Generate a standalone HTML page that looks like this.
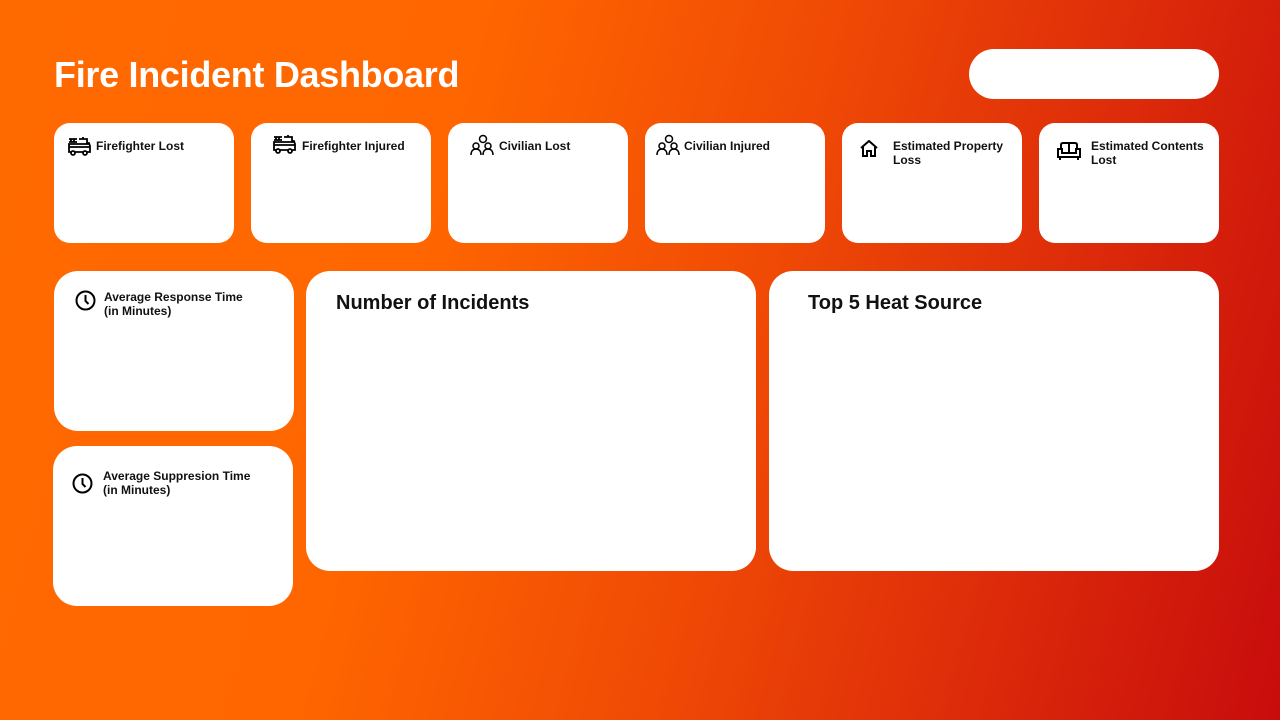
<!DOCTYPE html>
<html><head><meta charset="utf-8"><style>
*{margin:0;padding:0;box-sizing:border-box}
body{width:1280px;height:720px;overflow:hidden;font-family:"Liberation Sans",sans-serif;
background:linear-gradient(105deg,#ff6a00 0%,#ff6600 33%,#f04a05 57%,#dc2a0a 79%,#c80c0c 100%);position:relative}
.c{position:absolute;background:#fff;border-radius:16px}
h1{position:absolute;left:54px;top:54px;color:#fff;font-size:36px;font-weight:bold;letter-spacing:-0.3px}
.t{position:absolute;font-size:12px;font-weight:bold;color:#111;line-height:14px}
.b{position:absolute;font-size:20px;font-weight:bold;color:#111}
svg{position:absolute}
</style></head><body>
<h1>Fire Incident Dashboard</h1>
<div class="c" style="left:969px;top:49px;width:250px;height:50px;border-radius:25px"></div>

<div class="c" style="left:54px;top:123px;width:180px;height:120px"></div>
<div class="c" style="left:251px;top:123px;width:180px;height:120px"></div>
<div class="c" style="left:448px;top:123px;width:180px;height:120px"></div>
<div class="c" style="left:645px;top:123px;width:180px;height:120px"></div>
<div class="c" style="left:842px;top:123px;width:180px;height:120px"></div>
<div class="c" style="left:1039px;top:123px;width:180px;height:120px"></div>

<svg style="left:68px;top:136px" width="23" height="20" viewBox="0 0 23 20" fill="none" stroke="#000" stroke-width="1.8"><path d="M1 3h8M1 6h8M3 3v3M6 3v3M15 1v2M11 3h8v4h2l1 3v6H1V8h21M1 11h21"/><circle cx="5" cy="17" r="2" fill="#fff"/><circle cx="17" cy="17" r="2" fill="#fff"/></svg>
<div class="t" style="left:96px;top:139px">Firefighter Lost</div>
<svg style="left:273px;top:134px" width="23" height="20" viewBox="0 0 23 20" fill="none" stroke="#000" stroke-width="1.8"><path d="M1 3h8M1 6h8M3 3v3M6 3v3M15 1v2M11 3h8v4h2l1 3v6H1V8h21M1 11h21"/><circle cx="5" cy="17" r="2" fill="#fff"/><circle cx="17" cy="17" r="2" fill="#fff"/></svg>
<div class="t" style="left:302px;top:139px">Firefighter Injured</div>

<svg style="left:470px;top:134px" width="24" height="22" viewBox="0 0 24 22" fill="none" stroke="#000" stroke-width="1.5"><circle cx="13" cy="5" r="3.5"/><circle cx="6" cy="12" r="3"/><circle cx="18" cy="12" r="3"/><path d="M1 21c0-4 2-6 5-6s5 2 5 6M13 21c0-4 2-6 5-6s5 2 5 6"/></svg>
<div class="t" style="left:499px;top:139px">Civilian Lost</div>
<svg style="left:656px;top:134px" width="24" height="22" viewBox="0 0 24 22" fill="none" stroke="#000" stroke-width="1.5"><circle cx="13" cy="5" r="3.5"/><circle cx="6" cy="12" r="3"/><circle cx="18" cy="12" r="3"/><path d="M1 21c0-4 2-6 5-6s5 2 5 6M13 21c0-4 2-6 5-6s5 2 5 6"/></svg>
<div class="t" style="left:684px;top:139px">Civilian Injured</div>

<svg style="left:860px;top:140px" width="18" height="17" viewBox="0 0 18 17" fill="none" stroke="#000" stroke-width="2"><path d="M1 8L9 1l8 7M3 7v9h4v-5h4v5h4V7"/></svg>
<div class="t" style="left:893px;top:139px">Estimated Property<br>Loss</div>
<svg style="left:1057px;top:142px" width="24" height="19" viewBox="0 0 24 19" fill="none" stroke="#000" stroke-width="2"><path d="M4 7V3q0-2 2-2h12q2 0 2 2v4M12 1v9M1 7h4v4h14V7h4v8H1zM3 15v3M21 15v3"/></svg>
<div class="t" style="left:1091px;top:139px">Estimated Contents<br>Lost</div>

<div class="c" style="left:54px;top:271px;width:240px;height:160px;border-radius:24px"></div>
<div class="c" style="left:53px;top:446px;width:240px;height:160px;border-radius:24px"></div>
<svg style="left:75px;top:290px" width="21" height="21" viewBox="0 0 21 21" fill="none" stroke="#000" stroke-width="2"><circle cx="10.5" cy="10.5" r="9"/><path d="M10.5 5v6l3 3"/></svg>
<div class="t" style="left:104px;top:290px">Average Response Time<br>(in Minutes)</div>
<svg style="left:72px;top:473px" width="21" height="21" viewBox="0 0 21 21" fill="none" stroke="#000" stroke-width="2"><circle cx="10.5" cy="10.5" r="9"/><path d="M10.5 5v6l3 3"/></svg>
<div class="t" style="left:103px;top:469px">Average Suppresion Time<br>(in Minutes)</div>

<div class="c" style="left:306px;top:271px;width:450px;height:300px;border-radius:24px"></div>
<div class="b" style="left:336px;top:292px">Number of Incidents</div>
<div class="c" style="left:769px;top:271px;width:450px;height:300px;border-radius:24px"></div>
<div class="b" style="left:808px;top:292px">Top 5 Heat Source</div>
</body></html>
